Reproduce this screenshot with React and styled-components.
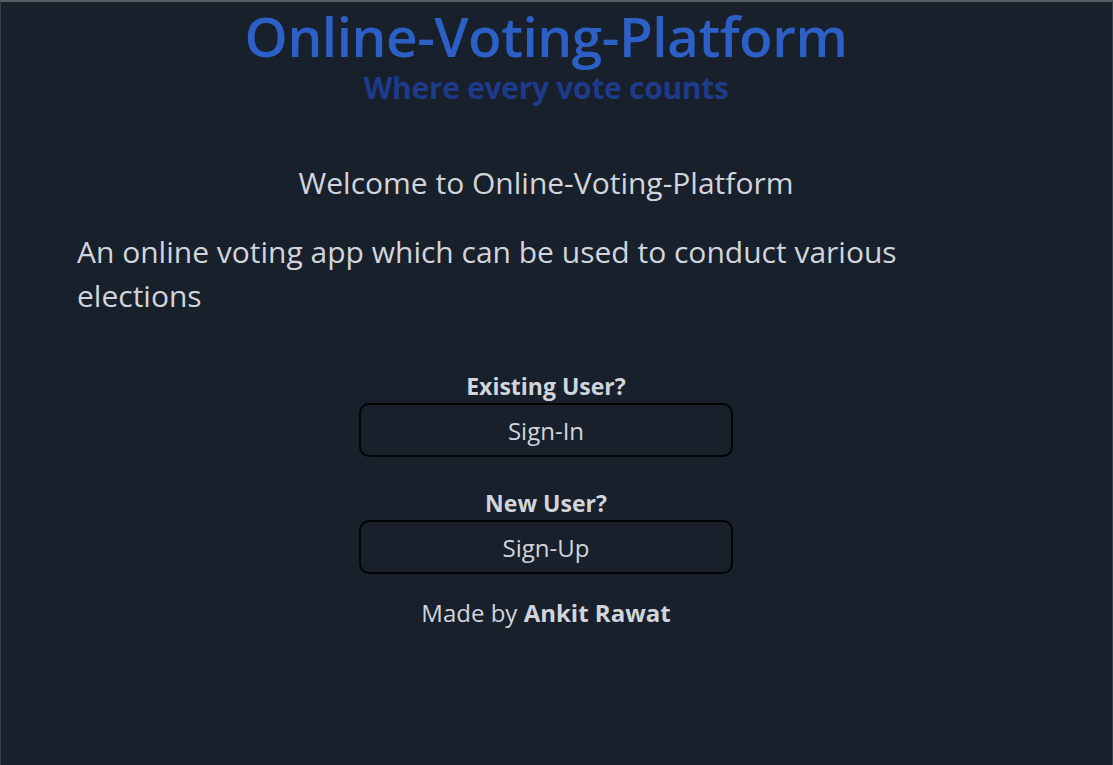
import React from "react";
import styled, { createGlobalStyle } from "styled-components";

const GlobalStyle = createGlobalStyle`
  html, body {
    margin: 0;
    padding: 0;
    background-color: #18202c;
  }

  body {
    font-family: "Open Sans", "Noto Sans", sans-serif;
    color: #d1d5db;
  }

  * {
    box-sizing: border-box;
  }
`;

const Page = styled.div`
  min-height: 100vh;
  border-top: 2px solid #5a5e64;
  border-left: 1px solid #3a4049;
  border-right: 1px solid #3a4049;
  padding-right: 21px;
  background-color: #18202c;
  display: flex;
  flex-direction: column;
`;

const Header = styled.header`
  text-align: center;
`;

const Title = styled.h1`
  margin: 0;
  font-size: 55px;
  line-height: 68px;
  font-weight: 600;
  color: #2d60c6;
  letter-spacing: -0.5px;
`;

const Tagline = styled.h2`
  margin: 0;
  font-size: 30px;
  line-height: 36px;
  font-weight: 700;
  color: #1e3a8a;
  letter-spacing: -0.3px;
`;

const Main = styled.main`
  padding: 57px 0 0 76px;
  display: flex;
  flex-direction: column;
`;

const Welcome = styled.p`
  margin: 0 0 0 -76px;
  text-align: center;
  font-size: 30px;
  line-height: 40px;
`;

const Description = styled.p`
  margin: 27px 0 0;
  font-size: 30px;
  line-height: 44px;
  max-width: 860px;
`;

const Actions = styled.div`
  margin: 53px 0 0 -76px;
  display: flex;
  flex-direction: column;
  align-items: center;
`;

const Group = styled.div`
  display: flex;
  flex-direction: column;
  align-items: center;
  margin-bottom: ${props => props.gap || 0}px;
`;

const Label = styled.span`
  font-size: 23px;
  line-height: 30px;
  font-weight: 700;
  margin-bottom: 2px;
`;

const Button = styled.button`
  width: 374px;
  height: 54px;
  border: 2px solid #020406;
  border-radius: 10px;
  background-color: transparent;
  color: #d1d5db;
  font-family: inherit;
  font-size: 24px;
  cursor: pointer;
`;

const Credit = styled.p`
  margin: 24px 0 0;
  font-size: 24px;
  line-height: 30px;

  b {
    font-weight: 700;
  }
`;

export default function App() {
  return (
    <>
      <GlobalStyle />
      <Page>
        <Header>
          <Title>Online-Voting-Platform</Title>
          <Tagline>Where every vote counts</Tagline>
        </Header>
        <Main>
          <Welcome>Welcome to Online-Voting-Platform</Welcome>
          <Description>
            An online voting app which can be used to conduct various elections
          </Description>
          <Actions>
            <Group gap={31}>
              <Label>Existing User?</Label>
              <Button>Sign-In</Button>
            </Group>
            <Group>
              <Label>New User?</Label>
              <Button>Sign-Up</Button>
            </Group>
            <Credit>
              Made by <b>Ankit Rawat</b>
            </Credit>
          </Actions>
        </Main>
      </Page>
    </>
  );
}
